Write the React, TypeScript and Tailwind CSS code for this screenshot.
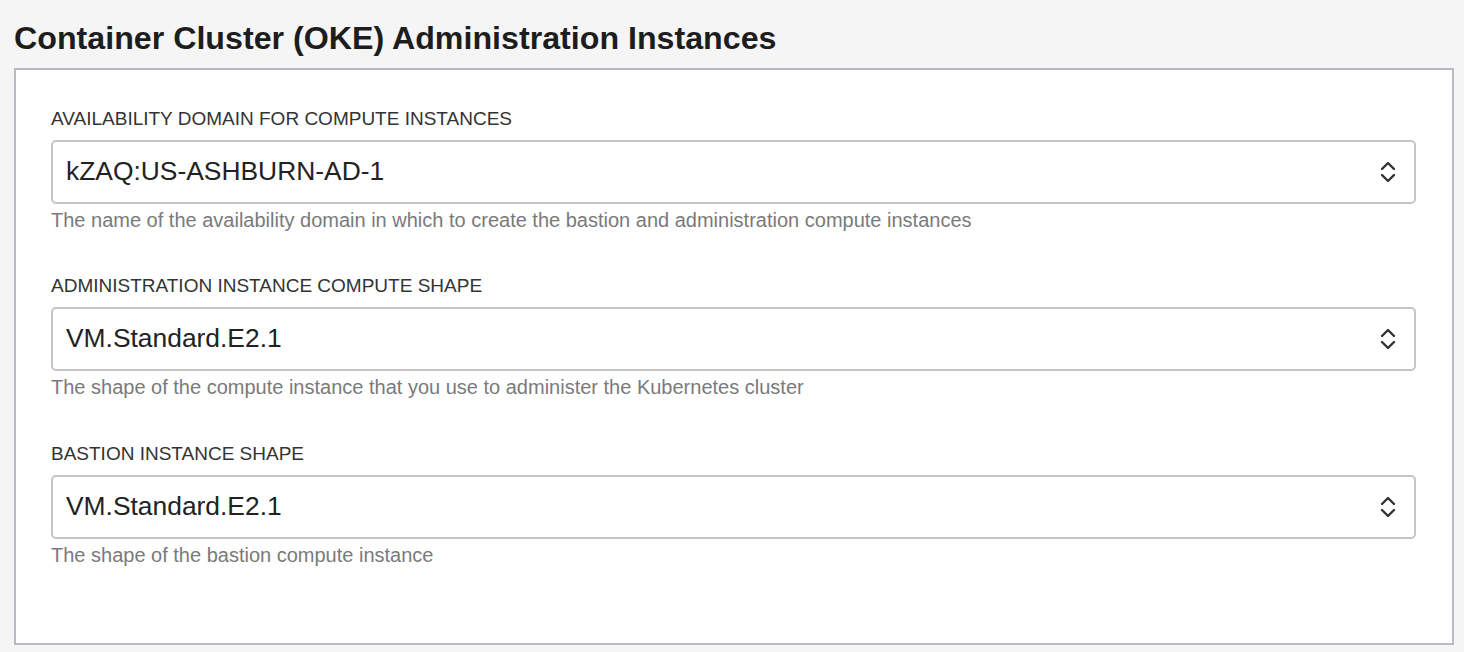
import React from 'react'

const fields = [
  {
    label: 'AVAILABILITY DOMAIN FOR COMPUTE INSTANCES',
    value: 'kZAQ:US-ASHBURN-AD-1',
    help: 'The name of the availability domain in which to create the bastion and administration compute instances',
  },
  {
    label: 'ADMINISTRATION INSTANCE COMPUTE SHAPE',
    value: 'VM.Standard.E2.1',
    help: 'The shape of the compute instance that you use to administer the Kubernetes cluster',
  },
  {
    label: 'BASTION INSTANCE SHAPE',
    value: 'VM.Standard.E2.1',
    help: 'The shape of the bastion compute instance',
  },
]

function UpDown() {
  return (
    <svg width="18" height="26" viewBox="0 0 18 26" fill="none" stroke="#333" strokeWidth="2.4" strokeLinecap="round" strokeLinejoin="round">
      <path d="M3 10 L9 4 L15 10" />
      <path d="M3 16 L9 22 L15 16" />
    </svg>
  )
}

export default function App() {
  return (
    <div className="min-h-screen bg-[#f5f5f5] px-[14px] pt-[19px] pb-[9px] font-['Liberation_Sans',Arial,sans-serif] text-[#222]">
      <h1 className="text-[32.2px] leading-[38px] font-bold mb-[11px] text-[#1d1d1d]">
        Container Cluster (OKE) Administration Instances
      </h1>

      <div className="w-[1440px] border-2 border-[#b8bcc0] bg-white pl-[35px] pr-[36px] pt-[38px] pb-[76px]">
        {fields.map((f, i) => (
          <div key={f.label} className={i === 1 ? 'mt-[43px]' : i === 2 ? 'mt-[44px]' : ''}>
            <div className="text-[19px] leading-[22px] text-[#333] mb-[10px]">{f.label}</div>
            <div className="flex items-center justify-between h-[64px] border-2 border-[#c3c6c9] rounded-[5px] pl-[13px] pr-[17px]">
              <span className="text-[26.4px] text-[#222]">{f.value}</span>
              <UpDown />
            </div>
            <div className="mt-[4px] text-[20px] leading-[24px] text-[#7a7a7a]">{f.help}</div>
          </div>
        ))}
      </div>
    </div>
  )
}
